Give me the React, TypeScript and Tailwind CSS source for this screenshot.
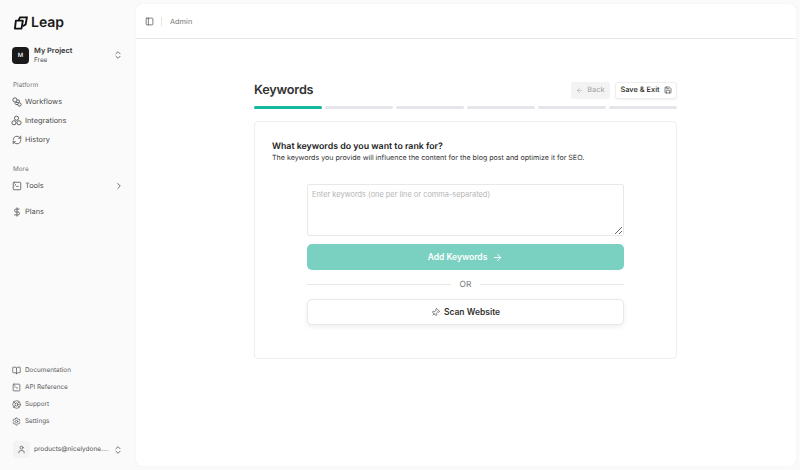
import React from "react";
import {
  ArrowLeft,
  ArrowRight,
  BookOpen,
  ChevronRight,
  ChevronsUpDown,
  DollarSign,
  LifeBuoy,
  PanelLeft,
  Pin,
  RefreshCw,
  Save,
  Settings,
  SquareTerminal,
  User,
} from "lucide-react";

const Logo = () => (
  <svg width="14" height="14" viewBox="0 0 15 15" fill="none" stroke="#111" strokeWidth="2">
    <path d="M5 4.5 L6.5 1.5 H13.8 L12.5 9 L9.5 11" />
    <path d="M2 5 H9.5 L8 13.5 H1 Z" strokeLinejoin="round" />
  </svg>
);

const Circles = ({ size = 12 }: { size?: number }) => (
  <svg width={size} height={size} viewBox="0 0 24 24" fill="none" stroke="currentColor" strokeWidth="2">
    <circle cx="12" cy="7" r="4.5" />
    <circle cx="6.5" cy="17" r="4.5" />
    <circle cx="17.5" cy="17" r="4.5" />
  </svg>
);

const Nodes = ({ size = 10 }: { size?: number }) => (
  <svg width={size} height={size} viewBox="0 0 24 24" fill="none" stroke="currentColor" strokeWidth="2.2">
    <circle cx="7" cy="7" r="5" />
    <circle cx="18" cy="18" r="4" />
    <path d="M12 7 H15 A3 3 0 0 1 15 13 H9 A3 3 0 0 0 9 18 H14" />
  </svg>
);

const NavItem = ({ icon, label, className = "" }: { icon: React.ReactNode; label: string; className?: string }) => (
  <div className={`flex h-[19px] items-center gap-[3px] pl-[11px] text-[#4b4b4b] ${className}`}>
    <span className="flex w-[11px] justify-center text-[#555]">{icon}</span>
    <span className="text-[7.4px] leading-none">{label}</span>
  </div>
);

const FooterItem = ({ icon, label }: { icon: React.ReactNode; label: string }) => (
  <div className="flex h-[17px] items-center gap-[4px] pl-[12px] text-[#5a5a5a]">
    <span className="flex w-[9px] justify-center">{icon}</span>
    <span className="text-[6.4px] leading-none">{label}</span>
  </div>
);

const Sidebar = () => (
  <aside className="flex h-full w-[136px] shrink-0 flex-col">
    <div className="flex items-center gap-[3px] pl-[14px] pt-[12px]">
      <Logo />
      <span className="text-[14px] font-semibold leading-[14px] text-[#1a1a1a]">Leap</span>
    </div>
    <div className="mt-[16px] flex items-center pl-[12px] pr-[13px]">
      <div className="flex h-[17px] w-[17px] items-center justify-center rounded-[4px] bg-[#1a1a1a] text-[6px] font-medium text-white">
        M
      </div>
      <div className="ml-[5px] flex-1">
        <div className="text-[7.4px] font-semibold leading-[10px] text-[#333]">My Project</div>
        <div className="text-[6.4px] leading-[8px] text-[#555]">Free</div>
      </div>
      <ChevronsUpDown size={10} className="text-[#555]" />
    </div>

    <div className="mt-[17px] pl-[13px] text-[6.4px] leading-[9px] text-[#777]">Platform</div>
    <div className="mt-[2px] flex flex-col">
      <NavItem icon={<Nodes size={10} />} label="Workflows" />
      <NavItem icon={<Circles size={11} />} label="Integrations" />
      <NavItem icon={<RefreshCw size={10} />} label="History" />
    </div>

    <div className="mt-[16px] pl-[13px] text-[6.4px] leading-[9px] text-[#777]">More</div>
    <div className="mt-[2px] flex items-center pr-[12px]">
      <NavItem icon={<SquareTerminal size={10} />} label="Tools" className="flex-1" />
      <ChevronRight size={10} className="text-[#555]" />
    </div>
    <NavItem icon={<DollarSign size={10} />} label="Plans" className="mt-[7px]" />

    <div className="mt-auto flex flex-col">
      <FooterItem icon={<BookOpen size={9} />} label="Documentation" />
      <FooterItem icon={<SquareTerminal size={9} />} label="API Reference" />
      <FooterItem icon={<LifeBuoy size={9} />} label="Support" />
      <FooterItem icon={<Settings size={9} />} label="Settings" />
    </div>
    <div className="mb-[8px] mt-[11px] flex items-center pl-[13px] pr-[13px]">
      <div className="flex h-[17px] w-[17px] items-center justify-center rounded-[4px] bg-[#f3f3f3] text-[#555]">
        <User size={9} />
      </div>
      <span className="ml-[4px] flex-1 truncate text-[6.5px] leading-none text-[#555]">products@nicelydone....</span>
      <ChevronsUpDown size={10} className="text-[#555]" />
    </div>
  </aside>
);

const App = () => {
  const steps = [true, false, false, false, false, false];
  return (
    <div
      className="flex h-[470px] w-[800px] overflow-hidden bg-[#fafafa] py-[4px] pr-[4px] antialiased [text-rendering:geometricPrecision]"
      style={{ fontFamily: "Inter, sans-serif" }}
    >
      <Sidebar />
      <main className="flex min-w-0 flex-1 flex-col rounded-[6px] bg-white shadow-[0_0_1px_rgba(0,0,0,0.12)]">
        <header className="flex h-[35px] shrink-0 items-center border-b border-[#e8e8e8] pl-[9px]">
          <PanelLeft size={9} className="text-[#555]" />
          <div className="ml-[7px] h-[9px] w-px bg-[#e5e5e5]" />
          <span className="ml-[8px] pt-px text-[7.4px] text-[#777]">Admin</span>
        </header>
        <div className="ml-[118px] w-[423px] pt-[41px]">
          <div className="flex h-[20px] items-center justify-between">
            <h1 className="pt-[2px] text-[12.7px] font-semibold leading-none tracking-[-0.2px] text-[#333]">Keywords</h1>
            <div className="flex items-center gap-[5px]">
              <div className="flex h-[17px] w-[39px] items-center justify-center gap-[4px] rounded-[3px] bg-[#f3f3f4] text-[7.4px] font-medium text-[#aaa]">
                <ArrowLeft size={7} />
                Back
              </div>
              <div className="flex h-[17px] w-[62px] items-center justify-center gap-[4px] rounded-[3px] border border-[#eee] bg-white text-[7.4px] font-medium text-[#222] shadow-[0_1px_2px_rgba(0,0,0,0.06)]">
                Save &amp; Exit
                <Save size={8} className="text-[#444]" />
              </div>
            </div>
          </div>
          <div className="mt-[6px] flex gap-[3px]">
            {steps.map((active, i) => (
              <div key={i} className={`h-[3px] flex-1 rounded-full ${active ? "bg-[#14b8a0]" : "bg-[#e6e6ea]"}`} />
            ))}
          </div>
          <section className="mt-[12px] h-[238px] rounded-[4px] border border-[#eeeeee] px-[17px] pt-[18px]">
            <h2 className="text-[8.8px] font-semibold leading-[13px] text-[#1a1a1a]">
              What keywords do you want to rank for?
            </h2>
            <p className="-mt-px text-[7.1px] leading-[11px] text-[#333]">
              The keywords you provide will influence the content for the blog post and optimize it for SEO.
            </p>
            <div className="mx-[35px] mt-[21px] flex flex-col">
              <textarea
                readOnly
                className="h-[52px] w-full rounded-[2px] border border-[#e8e8e8] px-[4px] py-[4px] text-[7.4px] leading-[12px] outline-none placeholder:text-[#b5b5b5]"
                placeholder="Enter keywords (one per line or comma-separated)"
              />
              <button className="mt-[8px] flex h-[26px] items-center justify-center gap-[5px] rounded-[5px] bg-[#7bd1c1] text-[8.5px] font-semibold text-white">
                Add Keywords
                <ArrowRight size={11} />
              </button>
              <div className="mt-[8px] flex h-[12px] items-center gap-[9px]">
                <div className="h-px flex-1 bg-[#e8e8e8]" />
                <span className="pt-[2px] text-[8.4px] leading-none text-[#777]">OR</span>
                <div className="h-px flex-1 bg-[#e8e8e8]" />
              </div>
              <button className="mt-[9px] flex h-[26px] items-center justify-center gap-[4px] rounded-[5px] border border-[#e8e8e8] bg-white text-[8.5px] font-semibold text-[#333] shadow-[0_2px_5px_rgba(0,0,0,0.07)]">
                <Pin size={9} className="rotate-45 text-[#555]" />
                Scan Website
              </button>
            </div>
          </section>
        </div>
      </main>
    </div>
  );
};

export default App;
